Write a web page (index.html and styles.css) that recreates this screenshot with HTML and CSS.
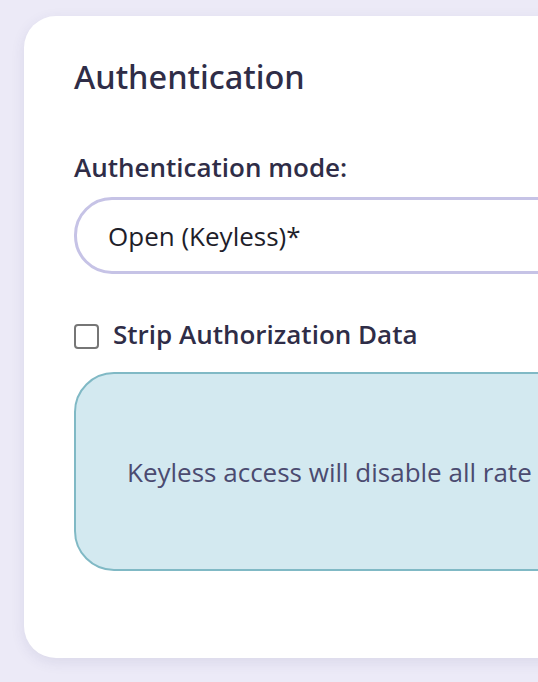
FILE: index.html
```html
<!DOCTYPE html>
<html>
<head>
<meta charset="utf-8">
<link rel="stylesheet" href="styles.css">
</head>
<body>
<div class="page">
  <section class="card">
    <h2 class="title">Authentication</h2>
    <div class="field">
      <label class="label">Authentication mode:</label>
      <div class="select">Open (Keyless)*</div>
    </div>
    <label class="check">
      <span class="box"></span>
      <span class="check-label">Strip Authorization Data</span>
    </label>
    <div class="alert">
      <p class="alert-text">Keyless access will disable all rate limiting and quotas for this API.</p>
    </div>
  </section>
</div>
</body>
</html>
```
FILE: styles.css
```css
html, body {
  margin: 0;
  padding: 0;
  background: #eceaf7;
  font-family: "Open Sans", "Noto Sans", sans-serif;
  overflow: hidden;
}
.page {
  width: 538px;
  height: 682px;
  padding: 16px 0 0 24px;
  box-sizing: border-box;
  overflow: hidden;
}
.card {
  width: 1000px;
  height: 642px;
  box-sizing: border-box;
  background: #ffffff;
  border-radius: 32px;
  box-shadow: 0 4px 14px rgba(60, 60, 120, 0.10);
  padding: 41px 50px 0 50px;
  display: flex;
  flex-direction: column;
}
.title {
  margin: 0;
  font-family: "Noto Sans", "Open Sans", sans-serif;
  font-size: 32.5px;
  font-weight: 500;
  color: #2f2d47;
  line-height: 40px;
}
.field {
  margin-top: 53px;
  display: flex;
  flex-direction: column;
  gap: 13px;
}
.label {
  font-size: 26px;
  font-weight: 600;
  color: #2f2d47;
  line-height: 34px;
}
.select {
  height: 77px;
  box-sizing: border-box;
  border: 3px solid #c6c3e6;
  border-radius: 38px;
  padding: 0 31px;
  display: flex;
  align-items: center;
  font-size: 26px;
  color: #1e1e2a;
}
.check {
  margin-top: 43px;
  display: flex;
  align-items: center;
  gap: 14px;
}
.box {
  width: 25px;
  height: 25px;
  box-sizing: border-box;
  border: 2px solid #767676;
  border-radius: 4px;
  background: #fff;
  margin-top: 4px;
}
.check-label {
  font-size: 26px;
  font-weight: 600;
  color: #2f2d47;
  line-height: 34px;
}
.alert {
  margin-top: 21px;
  height: 199px;
  box-sizing: border-box;
  background: #d3e9f0;
  border: 2px solid #80b9c5;
  border-radius: 40px;
  padding: 0 51px;
  display: flex;
  align-items: center;
}
.alert-text {
  margin: 0;
  font-size: 26px;
  color: #4b4b70;
  white-space: nowrap;
}
```
